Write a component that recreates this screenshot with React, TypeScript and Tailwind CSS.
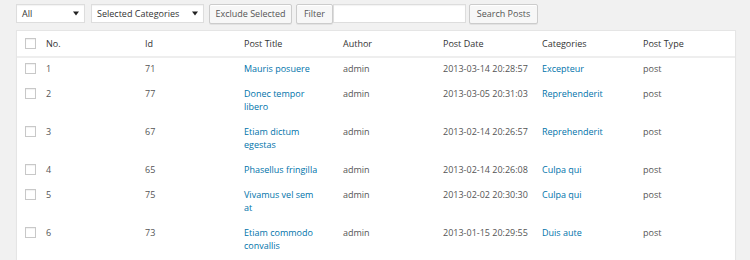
import React from 'react';

const posts = [
  { no: 1, id: 71, title: ['Mauris posuere'], date: '2013-03-14 20:28:57', cat: 'Excepteur' },
  { no: 2, id: 77, title: ['Donec tempor', 'libero'], date: '2013-03-05 20:31:03', cat: 'Reprehenderit' },
  { no: 3, id: 67, title: ['Etiam dictum', 'egestas'], date: '2013-02-14 20:26:57', cat: 'Reprehenderit' },
  { no: 4, id: 65, title: ['Phasellus fringilla'], date: '2013-02-14 20:26:08', cat: 'Culpa qui' },
  { no: 5, id: 75, title: ['Vivamus vel sem', 'at'], date: '2013-02-02 20:30:30', cat: 'Culpa qui' },
  { no: 6, id: 73, title: ['Etiam commodo', 'convallis'], date: '2013-01-15 20:29:55', cat: 'Duis aute' },
];

const cols = 'grid grid-cols-[22px_99px_99px_99px_100px_99px_101px_1fr]';

const Check = () => (
  <span className="block w-[11px] h-[11px] mt-[1px] border border-[#c8c8c8] bg-white shadow-[inset_0_1px_1px_rgba(0,0,0,0.06)]" />
);

const Select = ({ label, width }: { label: string; width: string }) => (
  <div className={`${width} h-[19px] flex items-center justify-between bg-white border border-[#dddddd] shadow-[inset_0_1px_1px_rgba(0,0,0,0.05)] pl-[5px] pr-[5px] text-[#333]`}>
    <span>{label}</span>
    <svg width="6" height="5" viewBox="0 0 6 5">
      <path d="M0 0.5 L6 0.5 L3 4.5 Z" fill="#222" />
    </svg>
  </div>
);

const Button = ({ children, width }: { children: React.ReactNode; width: string }) => (
  <button className={`${width} h-[20px] flex items-center justify-center bg-[#f7f7f7] border border-[#cccccc] rounded-[2px] shadow-[inset_0_1px_0_#fff,0_1px_0_rgba(0,0,0,0.06)] text-[#555]`}>
    {children}
  </button>
);

export default function App() {
  return (
    <div
      className="w-[750px] h-[260px] overflow-hidden bg-[#f1f1f1] pl-[16px] text-[9px] leading-[13px]"
      style={{ fontFamily: '"Open Sans", "Noto Sans", sans-serif' }}
    >
      {/* Toolbar */}
      <div className="flex items-center pt-[4px] h-[23px]">
        <Select label="All" width="w-[69px]" />
        <div className="w-[6px]" />
        <Select label="Selected Categories" width="w-[113px]" />
        <div className="w-[5px]" />
        <Button width="w-[83px]">Exclude Selected</Button>
        <div className="w-[4px]" />
        <Button width="w-[37px]">Filter</Button>
        <div className="w-[133px] h-[19px] bg-white border border-[#dddddd] shadow-[inset_0_1px_1px_rgba(0,0,0,0.05)]" />
        <div className="w-[3px]" />
        <Button width="w-[69px]">Search Posts</Button>
      </div>

      {/* Table */}
      <div className="mt-[7px] w-[720px] bg-white border border-[#e5e5e5] shadow-[0_1px_1px_rgba(0,0,0,0.04)]">
        <div className={`${cols} border-b-2 border-[#eeeeee] text-[#333]`}>
          <div className="pl-[8px] py-[6px] h-[25px]"><Check /></div>
          {['No.', 'Id', 'Post Title', 'Author', 'Post Date', 'Categories', 'Post Type'].map(h => (
            <div key={h} className="px-[7px] py-[6px]">{h}</div>
          ))}
        </div>
        {posts.map(p => (
          <div key={p.no} className={`${cols} text-[#555]`}>
            <div className="pl-[8px] pt-[4px] pb-[8px]"><Check /></div>
            <div className="px-[7px] pt-[4px] pb-[8px]">{p.no}</div>
            <div className="px-[7px] pt-[4px] pb-[8px]">{p.id}</div>
            <div className="px-[7px] pt-[4px] pb-[8px] text-[#0073aa] whitespace-nowrap">
              {p.title.map(line => <div key={line}>{line}</div>)}
            </div>
            <div className="px-[7px] pt-[4px] pb-[8px]">admin</div>
            <div className="px-[7px] pt-[4px] pb-[8px] whitespace-nowrap">{p.date}</div>
            <div className="px-[7px] pt-[4px] pb-[8px] text-[#0073aa]">{p.cat}</div>
            <div className="px-[7px] pt-[4px] pb-[8px]">post</div>
          </div>
        ))}
      </div>
    </div>
  );
}
